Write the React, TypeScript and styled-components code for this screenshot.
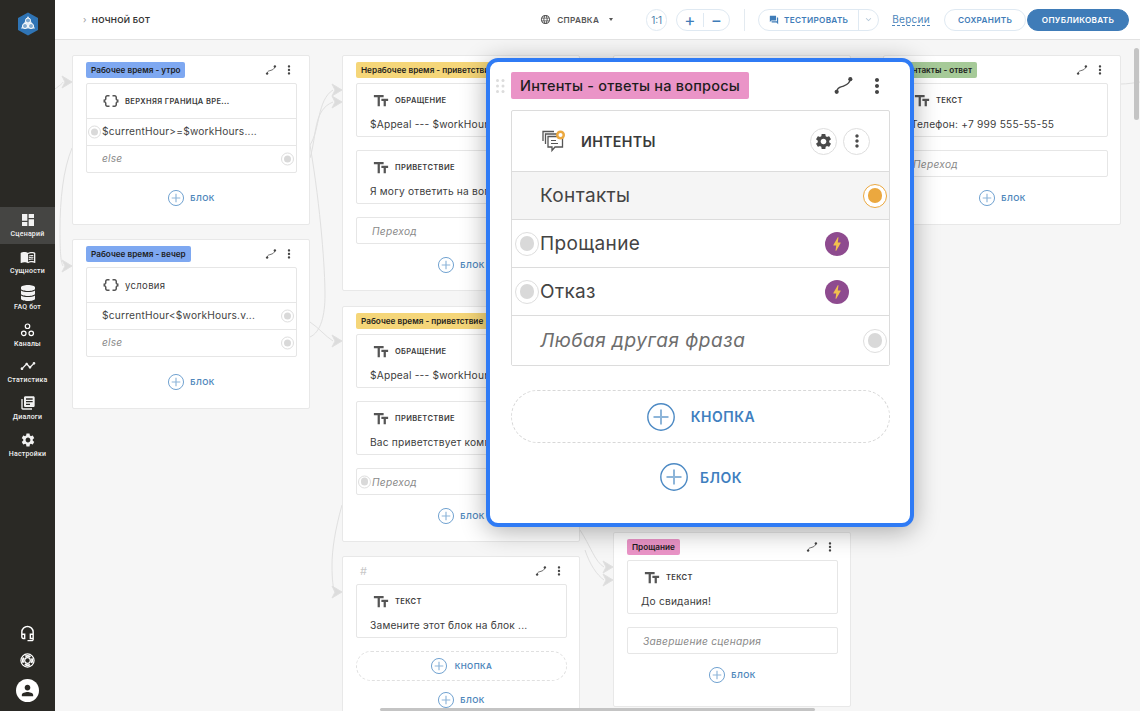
import React from 'react'
import styled, { createGlobalStyle } from 'styled-components'
import {
  MdBolt,
  MdDashboard,
  MdDataObject,
  MdForum,
  MdKeyboardArrowDown,
  MdLanguage,
  MdLibraryBooks,
  MdMenuBook,
  MdMoreVert,
  MdOutlineHeadsetMic,
  MdPerson,
  MdSettings,
  MdTextFields,
  MdTimeline,
} from 'react-icons/md'
import { FaDatabase } from 'react-icons/fa'

const Global = createGlobalStyle`
  html, body { margin: 0; padding: 0; height: 100%; overflow: hidden; }
  body { font-family: "Inter", "Noto Sans", sans-serif; color: #3c3c3c; background: #f6f6f6; }
  * { box-sizing: border-box; }
`

const Page = styled.div`
  display: flex;
  width: 1140px;
  height: 711px;
`

const Sidebar = styled.nav`
  width: 55px;
  flex: none;
  display: flex;
  flex-direction: column;
  align-items: stretch;
  background: #2a2925;
  color: #fff;
`

const LogoBox = styled.div`
  height: 207px;
  padding-top: 12px;
  display: flex;
  justify-content: center;
  align-items: flex-start;
`

const SideItem = styled.div<{ $active?: boolean }>`
  height: 36.6px;
  display: flex;
  flex-direction: column;
  align-items: center;
  padding-top: 5px;
  background: ${p => (p.$active ? '#454543' : 'transparent')};
  font: 500 7px "Roboto", sans-serif;
  letter-spacing: 0.2px;
  color: #f2f2f2;
  svg { display: block; height: 16px; margin-bottom: 2px; }
`

const SideBottom = styled.div`
  margin-top: auto;
  padding-bottom: 9px;
  display: flex;
  flex-direction: column;
  align-items: center;
  gap: 11px;
`

const Avatar = styled.div`
  width: 23px;
  height: 23px;
  border-radius: 50%;
  background: #fff;
  color: #2a2925;
  display: flex;
  align-items: center;
  justify-content: center;
`

const Main = styled.div`
  flex: 1;
  min-width: 0;
  display: flex;
  flex-direction: column;
`

const TopBar = styled.header`
  height: 40px;
  flex: none;
  background: #fff;
  border-bottom: 1px solid #e2e2e2;
  display: flex;
  align-items: center;
  padding: 0 11px 0 28px;
  font-size: 8.2px;
  font-weight: 600;
  letter-spacing: 0.3px;
`

const Crumb = styled.div`
  display: flex;
  align-items: center;
  gap: 5px;
  color: #333;
  span:first-child { color: #999; font-weight: 400; font-size: 9px; }
`

const Help = styled.div`
  margin-left: auto;
  display: flex;
  align-items: center;
  gap: 6px;
  color: #555;
  i { width: 0; height: 0; margin-left: 4px; border: 2.5px solid transparent; border-top: 3px solid #555; border-bottom: 0; }
`

const Pill = styled.div<{ $w: number; $filled?: boolean; $ml: number }>`
  width: ${p => p.$w}px;
  height: 22px;
  margin-left: ${p => p.$ml}px;
  flex: none;
  border-radius: 11px;
  border: 1px solid ${p => (p.$filled ? '#3f7cb8' : '#dfe9f2')};
  background: ${p => (p.$filled ? '#3f7cb8' : '#fff')};
  color: ${p => (p.$filled ? '#fff' : '#3f7cb8')};
  display: flex;
  align-items: center;
  justify-content: center;
  white-space: nowrap;
`

const ZoomPart = styled.span`
  flex: 1;
  height: 14px;
  display: flex;
  align-items: center;
  justify-content: center;
  font-size: 17px;
  font-weight: 400;
  & + & { border-left: 1px solid #dfe9f2; }
`

const ZoomLabel = styled.span`
  font-size: 10px;
  font-weight: 400;
  color: #4d7ea8;
  letter-spacing: 0;
`

const TestMain = styled.span`
  flex: 1;
  height: 100%;
  display: flex;
  align-items: center;
  justify-content: center;
  gap: 5px;
`

const TestArrow = styled.span`
  width: 20px;
  height: 100%;
  border-left: 1px solid #dfe9f2;
  color: #b5c8d8;
  display: flex;
  align-items: center;
  justify-content: center;
`

const Divider = styled.div`
  width: 1px;
  height: 22px;
  margin-left: 14px;
  background: #e3eaf0;
`

const Versions = styled.span`
  margin-left: 13px;
  font-size: 10px;
  font-weight: 400;
  color: #4d86bb;
  border-bottom: 1px dashed #4d86bb;
  line-height: 11px;
`

const Canvas = styled.main`
  position: relative;
  flex: 1;
  overflow: hidden;
  background: #f6f6f6;
`

const Wires = styled.svg`
  position: absolute;
  left: 0;
  top: 0;
`

const Node = styled.section<{ $x: number; $y: number; $h: number }>`
  position: absolute;
  left: ${p => p.$x}px;
  top: ${p => p.$y}px;
  width: 238px;
  height: ${p => p.$h}px;
  padding: 6px 12px 7px 13px;
  background: #fff;
  border: 1px solid #e8e8e8;
  border-radius: 2px;
`

const NodeHead = styled.div`
  height: 16px;
  margin-bottom: 5px;
  display: flex;
  align-items: center;
  justify-content: space-between;
`

const Tag = styled.span<{ $color: string }>`
  height: 16px;
  padding: 0 5px;
  display: inline-flex;
  align-items: center;
  background: ${p => p.$color};
  border-radius: 2px;
  color: #1d1d1d;
  font-size: 8.2px;
  font-weight: 600;
  white-space: nowrap;
`

const Hash = styled.span`
  color: #c8c8c8;
  font-size: 11px;
  padding-left: 4px;
`

const HeadTools = styled.div`
  display: flex;
  align-items: center;
  gap: 5px;
  padding-right: 1px;
  color: #444;
`

const Card = styled.div`
  border: 1px solid #e6e6e6;
  border-radius: 2px;
  background: #fff;
`

const TextCard = styled(Card)`
  height: 54px;
  margin-bottom: 13px;
  padding: 8px 8px 0 13px;
  overflow: hidden;
`

const Label = styled.div<{ $lower?: boolean }>`
  display: flex;
  align-items: center;
  gap: 5px;
  padding-left: 2px;
  height: 17px;
  color: #3a3a3a;
  font-size: ${p => (p.$lower ? 9.5 : 7.5)}px;
  font-weight: ${p => (p.$lower ? 400 : 600)};
  letter-spacing: 0.35px;
  white-space: nowrap;
  svg { color: #555; flex: none; }
`

const Body = styled.div`
  margin-top: 8px;
  font-size: 10.2px;
  line-height: 14px;
  letter-spacing: 0.2px;
  white-space: nowrap;
`

const Jump = styled(Card)`
  position: relative;
  height: 27px;
  margin-bottom: 13px;
  padding-left: 15px;
  display: flex;
  align-items: center;
  font-size: 10.2px;
  font-style: italic;
  color: #8a8a8a;
  letter-spacing: 0.25px;
`

const CondHead = styled.div`
  height: 34px;
  padding: 0 0 0 13px;
  display: flex;
  align-items: center;
`

const CondRow = styled.div<{ $muted?: boolean }>`
  position: relative;
  height: 27px;
  padding: 0 0 2px 15px;
  display: flex;
  align-items: center;
  border-top: 1px solid #e6e6e6;
  font-size: 10.2px;
  letter-spacing: 0.2px;
  font-style: ${p => (p.$muted ? 'italic' : 'normal')};
  color: ${p => (p.$muted ? '#8a8a8a' : '#444')};
  white-space: nowrap;
`

const Port = styled.span<{ $size: number; $side: 'left' | 'right'; $edge: number; $orange?: boolean }>`
  position: absolute;
  top: 50%;
  ${p => p.$side}: ${p => p.$edge}px;
  width: ${p => p.$size}px;
  height: ${p => p.$size}px;
  transform: translateY(-50%);
  border-radius: 50%;
  border: 1px solid ${p => (p.$orange ? '#eba83f' : '#dedede')};
  background: #fff;
  display: flex;
  align-items: center;
  justify-content: center;
  &::after {
    content: '';
    width: 66%;
    height: 66%;
    border-radius: 50%;
    background: ${p => (p.$orange ? '#eba83f' : '#d9d9d9')};
  }
`

const AddBlock = styled.div<{ $top: number }>`
  margin-top: ${p => p.$top}px;
  display: flex;
  align-items: center;
  justify-content: center;
  gap: 6px;
  color: #4d86bb;
  font-size: 8px;
  font-weight: 600;
  letter-spacing: 0.4px;
`

const AddButton = styled.div`
  height: 30px;
  margin-bottom: 11px;
  border: 1px dashed #e0e0e0;
  border-radius: 15px;
  display: flex;
  align-items: center;
  justify-content: center;
  gap: 8px;
  color: #4d86bb;
  font-size: 8px;
  font-weight: 600;
  letter-spacing: 0.4px;
`

const Modal = styled.section`
  position: absolute;
  left: 431px;
  top: 18px;
  width: 428px;
  height: 469px;
  padding: 10px 20px 0 21px;
  background: #fff;
  border: 4px solid #2f7bf5;
  border-radius: 12px;
  box-shadow: 0 4px 26px rgba(0, 0, 0, 0.32);
`

const ModalHead = styled.div`
  position: relative;
  height: 27px;
  margin-bottom: 11px;
  display: flex;
  align-items: center;
  justify-content: space-between;
`

const Grip = styled.svg`
  position: absolute;
  left: -15px;
  top: 7px;
`

const ModalTag = styled(Tag)`
  height: 27px;
  padding: 0 9px;
  font-size: 14.5px;
  font-weight: 500;
  letter-spacing: 0.2px;
`

const ModalTools = styled.div`
  display: flex;
  align-items: center;
  gap: 11px;
  padding-right: 1px;
  color: #444;
`

const ModalList = styled(Card)`
  border-color: #dcdcdc;
  margin-bottom: 24px;
`

const ModalListHead = styled.div`
  height: 60px;
  padding: 0 19px 0 29px;
  display: flex;
  align-items: center;
  gap: 15px;
  font-size: 14.3px;
  font-weight: 600;
  letter-spacing: 0.3px;
  color: #3a3a3a;
`

const RoundTools = styled.div`
  margin-left: auto;
  display: flex;
  gap: 6px;
`

const RoundTool = styled.span`
  width: 27px;
  height: 27px;
  border: 1px solid #dedede;
  border-radius: 50%;
  display: flex;
  align-items: center;
  justify-content: center;
  color: #4a4a4a;
`

const ModalRow = styled.div<{ $bg?: boolean; $tall?: boolean; $muted?: boolean }>`
  position: relative;
  height: ${p => (p.$tall ? 50 : 48)}px;
  padding: 0 40px 0 28px;
  display: flex;
  align-items: center;
  justify-content: space-between;
  border-top: 1px solid #dcdcdc;
  background: ${p => (p.$bg ? '#f5f5f5' : '#fff')};
  font-size: 19px;
  letter-spacing: ${p => (p.$muted ? 0.5 : 0.35)}px;
  font-style: ${p => (p.$muted ? 'italic' : 'normal')};
  color: ${p => (p.$muted ? '#6d6d6d' : '#444')};
`

const Bolt = styled.span`
  width: 24px;
  height: 24px;
  border-radius: 50%;
  background: #8e4b8f;
  color: #f2c14e;
  display: flex;
  align-items: center;
  justify-content: center;
`

const ModalAddButton = styled.div`
  height: 53px;
  margin-bottom: 20px;
  border: 1px dashed #d8d8d8;
  border-radius: 27px;
  display: flex;
  align-items: center;
  justify-content: center;
  gap: 16px;
  padding-left: 1px;
  color: #3f7fbf;
  font-size: 14px;
  font-weight: 600;
  letter-spacing: 0.5px;
`

const ModalAddBlock = styled.div`
  display: flex;
  align-items: center;
  justify-content: center;
  gap: 12px;
  padding-left: 1px;
  color: #3f7fbf;
  font-size: 14px;
  font-weight: 600;
  letter-spacing: 0.5px;
`

const ScrollV = styled.div`
  position: absolute;
  right: 1px;
  top: 8px;
  width: 5px;
  height: 72px;
  border-radius: 3px;
  background: #c4c4c4;
`

const ScrollH = styled.div`
  position: absolute;
  left: 325px;
  bottom: 0;
  width: 435px;
  height: 3px;
  border-radius: 2px;
  background: #c4c4c4;
`

const Plus = ({ size }: { size: number }) => (
  <svg width={size} height={size} viewBox="0 0 28 28" fill="none">
    <circle cx="14" cy="14" r="13.2" stroke="#4d8ac4" strokeWidth="1.4" />
    <path d="M14 6.5v15M6.5 14h15" stroke="#8db5d9" strokeWidth="2" />
  </svg>
)

const Edge = ({ size }: { size: number }) => (
  <svg width={size} height={size} viewBox="0 0 20 20" fill="none">
    <path d="M3.5 16C4 11 7.5 11.5 10 10.5S15.5 9 16.5 4" stroke="#444" strokeWidth="1.3" />
    <circle cx="3.5" cy="16" r="2" fill="#444" />
    <circle cx="16.5" cy="4" r="2" fill="#444" />
  </svg>
)

const Hex = () => (
  <svg width="22" height="24" viewBox="0 0 22 24">
    <path d="M11 .5 21 6v12l-10 5.5L1 18V6z" fill="#2f74b5" />
    <path d="M11 4l7 12.5H4z" fill="#dce9f4" />
    <circle cx="11" cy="8.5" r="2.5" fill="#7fa9cf" stroke="#fff" />
    <circle cx="8" cy="14" r="2.5" fill="#7fa9cf" stroke="#fff" />
    <circle cx="14" cy="14" r="2.5" fill="#7fa9cf" stroke="#fff" />
  </svg>
)

const Channels = () => (
  <svg width="15" height="15" viewBox="0 0 16 16" fill="none" stroke="#fff" strokeWidth="1.3">
    <circle cx="8" cy="4" r="2.4" />
    <circle cx="4" cy="11.5" r="2.4" />
    <circle cx="12" cy="11.5" r="2.4" />
  </svg>
)

const Buoy = () => (
  <svg width="15" height="15" viewBox="0 0 16 16" fill="none" stroke="#fff">
    <circle cx="8" cy="8" r="7" strokeWidth="1.3" />
    <circle cx="8" cy="8" r="3" strokeWidth="1.3" />
    <circle cx="8" cy="8" r="5" strokeWidth="2" strokeDasharray="5.8 2" strokeDashoffset="2.9" />
  </svg>
)

const IntentIcon = () => (
  <svg width="25" height="25" viewBox="0 0 25 25" fill="none">
    <path d="M2 12V2.5h11M4.5 15V5H16" stroke="#555" strokeWidth="1.3" />
    <path d="M7 7.5h14.5V18H14l-3 3.5V18H7z" stroke="#555" strokeWidth="1.3" fill="#fff" />
    <path d="M10 11.5h5M10 14.5h7" stroke="#555" strokeWidth="1.2" />
    <circle cx="19.5" cy="6" r="4.5" fill="#eba83f" />
    <circle cx="19.5" cy="6" r="2" fill="#fff" />
  </svg>
)

const arrows: [number, number][] = [
  [17, 42],
  [17, 226],
  [287, 50],
  [287, 62],
  [287, 301],
  [287, 552],
  [558, 527],
  [558, 540],
]

const wirePaths = [
  'M0 49C4 46 8 43 8 42',
  'M17 108C8 130 5 160 5 190C5 215 6 222 8 226',
  'M255 105C265 90 262 60 278 50',
  'M255 118C262 95 258 70 278 62',
  'M255 105C266 170 270 230 270 255C270 275 266 292 255 297',
  'M255 282C264 288 270 296 278 301',
  'M287 465C280 490 277 510 277 525C277 540 278 548 280 552',
  'M525 490C535 505 540 522 549 527',
  'M530 510C535 525 542 535 549 540',
  'M1066 44C1072 44 1078 43 1085 42',
]

function Arrow({ at }: { at: [number, number] }) {
  const [x, y] = at
  return <polygon points={`${x - 10},${y - 6} ${x},${y} ${x - 10},${y + 6} ${x - 7},${y}`} fill="#dcdcdc" />
}

function Head({ tag, color }: { tag?: string; color?: string }) {
  return (
    <NodeHead>
      {tag && color ? <Tag $color={color}>{tag}</Tag> : <Hash>#</Hash>}
      <HeadTools>
        <Edge size={12} />
        <MdMoreVert size={14} />
      </HeadTools>
    </NodeHead>
  )
}

function TextBlock({ label, text }: { label: string; text: string }) {
  return (
    <TextCard>
      <Label>
        <MdTextFields size={18} />
        {label}
      </Label>
      <Body>{text}</Body>
    </TextCard>
  )
}

function AddBlockBtn({ top }: { top: number }) {
  return (
    <AddBlock $top={top}>
      <Plus size={16} />
      БЛОК
    </AddBlock>
  )
}

const BLUE = '#7ea8f1'
const YELLOW = '#f5d679'
const PINK = '#ea94c7'
const GREEN = '#a6ca98'

export default function App() {
  return (
    <Page>
      <Global />
      <Sidebar>
        <LogoBox>
          <Hex />
        </LogoBox>
        <SideItem $active>
          <MdDashboard size={18} />
          Сценарий
        </SideItem>
        <SideItem>
          <MdMenuBook size={18} />
          Сущности
        </SideItem>
        <SideItem>
          <FaDatabase size={14} />
          FAQ бот
        </SideItem>
        <SideItem>
          <Channels />
          Каналы
        </SideItem>
        <SideItem>
          <MdTimeline size={18} />
          Статистика
        </SideItem>
        <SideItem>
          <MdLibraryBooks size={16} />
          Диалоги
        </SideItem>
        <SideItem>
          <MdSettings size={18} />
          Настройки
        </SideItem>
        <SideBottom>
          <MdOutlineHeadsetMic size={17} />
          <Buoy />
          <Avatar>
            <MdPerson size={17} />
          </Avatar>
        </SideBottom>
      </Sidebar>
      <Main>
        <TopBar>
          <Crumb>
            <span>›</span>
            <span>НОЧНОЙ БОТ</span>
          </Crumb>
          <Help>
            <MdLanguage size={11} />
            <span>СПРАВКА</span>
            <i />
          </Help>
          <Pill $w={21} $ml={33}>
            <ZoomLabel>1:1</ZoomLabel>
          </Pill>
          <Pill $w={54} $ml={9}>
            <ZoomPart>+</ZoomPart>
            <ZoomPart>−</ZoomPart>
          </Pill>
          <Divider />
          <Pill $w={121} $ml={13}>
            <TestMain>
              <MdForum size={10} />
              ТЕСТИРОВАТЬ
            </TestMain>
            <TestArrow>
              <MdKeyboardArrowDown size={11} />
            </TestArrow>
          </Pill>
          <Versions>Версии</Versions>
          <Pill $w={82} $ml={14}>
            СОХРАНИТЬ
          </Pill>
          <Pill $w={102} $ml={1} $filled>
            ОПУБЛИКОВАТЬ
          </Pill>
        </TopBar>
        <Canvas>
          <Wires width="1085" height="671" fill="none" stroke="#e0e0e0" strokeWidth="1">
            {wirePaths.map(d => (
              <path key={d} d={d} />
            ))}
            {arrows.map(a => (
              <Arrow key={a.join()} at={a} />
            ))}
          </Wires>

          <Node $x={17} $y={15} $h={170}>
            <Head tag="Рабочее время - утро" color={BLUE} />
            <Card>
              <CondHead>
                <Label>
                  <MdDataObject size={18} />
                  ВЕРХНЯЯ ГРАНИЦА ВРЕ...
                </Label>
              </CondHead>
              <CondRow>
                <Port $size={13} $side="left" $edge={1} />
                $currentHour&gt;=$workHours....
              </CondRow>
              <CondRow $muted>
                else
                <Port $size={13} $side="right" $edge={2} />
              </CondRow>
            </Card>
            <AddBlockBtn top={17} />
          </Node>

          <Node $x={17} $y={199} $h={170}>
            <Head tag="Рабочее время - вечер" color={BLUE} />
            <Card>
              <CondHead>
                <Label $lower>
                  <MdDataObject size={18} />
                  условия
                </Label>
              </CondHead>
              <CondRow>
                $currentHour&lt;$workHours.v...
                <Port $size={13} $side="right" $edge={2} />
              </CondRow>
              <CondRow $muted>
                else
                <Port $size={13} $side="right" $edge={2} />
              </CondRow>
            </Card>
            <AddBlockBtn top={17} />
          </Node>

          <Node $x={287} $y={15} $h={236}>
            <Head tag="Нерабочее время - приветствие" color={YELLOW} />
            <TextBlock label="ОБРАЩЕНИЕ" text="$Appeal --- $workHours.value" />
            <TextBlock label="ПРИВЕТСТВИЕ" text="Я могу ответить на вопросы" />
            <Jump>Переход</Jump>
            <AddBlockBtn top={6} />
          </Node>

          <Node $x={287} $y={266} $h={236}>
            <Head tag="Рабочее время - приветствие" color={YELLOW} />
            <TextBlock label="ОБРАЩЕНИЕ" text="$Appeal --- $workHours.value" />
            <TextBlock label="ПРИВЕТСТВИЕ" text="Вас приветствует компания" />
            <Jump>
              <Port $size={13} $side="left" $edge={1} />
              Переход
            </Jump>
            <AddBlockBtn top={5} />
          </Node>

          <Node $x={287} $y={516} $h={170}>
            <Head />
            <TextBlock label="ТЕКСТ" text="Замените этот блок на блок ..." />
            <AddButton>
              <Plus size={16} />
              КНОПКА
            </AddButton>
            <AddBlockBtn top={1} />
          </Node>

          <Node $x={558} $y={15} $h={200} />

          <Node $x={558} $y={492} $h={175}>
            <Head tag="Прощание" color={PINK} />
            <TextBlock label="ТЕКСТ" text="До свидания!" />
            <Jump>Завершение сценария</Jump>
            <AddBlockBtn top={10} />
          </Node>

          <Node $x={828} $y={15} $h={170}>
            <Head tag="Контакты - ответ" color={GREEN} />
            <TextBlock label="ТЕКСТ" text="Телефон: +7 999 555-55-55" />
            <Jump>Переход</Jump>
            <AddBlockBtn top={5} />
          </Node>

          <Modal>
            <ModalHead>
              <Grip width="9" height="14" viewBox="0 0 9 14" fill="#dcdcdc">
                {[1.5, 7].map(x => [1.5, 7, 12.5].map(y => <circle key={`${x}-${y}`} cx={x} cy={y} r="1.5" />))}
              </Grip>
              <ModalTag $color={PINK}>Интенты - ответы на вопросы</ModalTag>
              <ModalTools>
                <Edge size={21} />
                <MdMoreVert size={24} />
              </ModalTools>
            </ModalHead>
            <ModalList>
              <ModalListHead>
                <IntentIcon />
                ИНТЕНТЫ
                <RoundTools>
                  <RoundTool>
                    <MdSettings size={19} />
                  </RoundTool>
                  <RoundTool>
                    <MdMoreVert size={20} />
                  </RoundTool>
                </RoundTools>
              </ModalListHead>
              <ModalRow $bg>
                Контакты
                <Port $size={24} $side="right" $edge={2} $orange />
              </ModalRow>
              <ModalRow>
                <Port $size={24} $side="left" $edge={3} />
                Прощание
                <Bolt>
                  <MdBolt size={18} />
                </Bolt>
              </ModalRow>
              <ModalRow>
                <Port $size={24} $side="left" $edge={3} />
                Отказ
                <Bolt>
                  <MdBolt size={18} />
                </Bolt>
              </ModalRow>
              <ModalRow $tall $muted>
                Любая другая фраза
                <Port $size={24} $side="right" $edge={2} />
              </ModalRow>
            </ModalList>
            <ModalAddButton>
              <Plus size={28} />
              КНОПКА
            </ModalAddButton>
            <ModalAddBlock>
              <Plus size={28} />
              БЛОК
            </ModalAddBlock>
          </Modal>

          <ScrollV />
          <ScrollH />
        </Canvas>
      </Main>
    </Page>
  )
}
